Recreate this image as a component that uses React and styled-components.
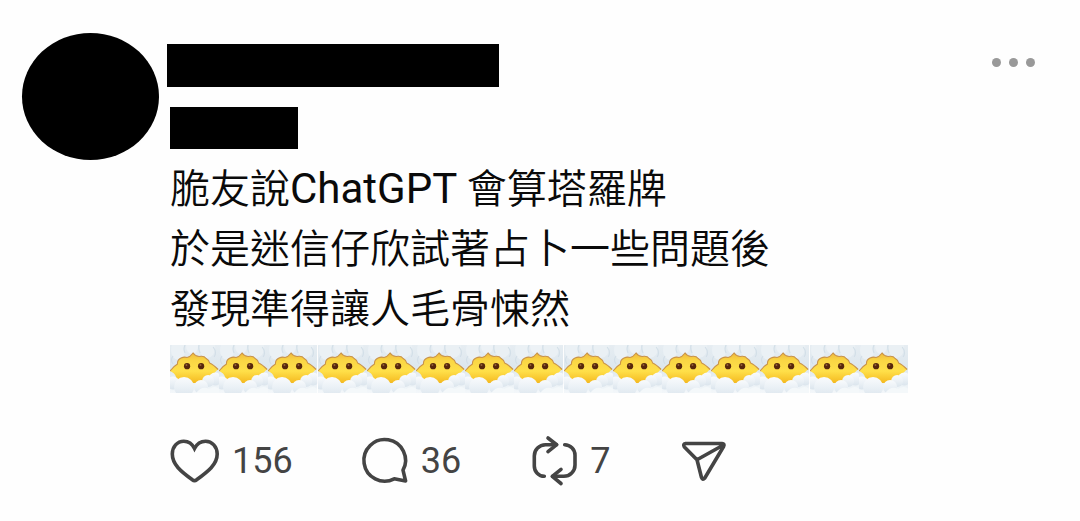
import React from "react";
import styled, { createGlobalStyle } from "styled-components";

const GlobalStyle = createGlobalStyle`
  * {
    box-sizing: border-box;
  }

  body {
    margin: 0;
    background: #fefefe;
    color: #0a0a0a;
    font-family: Roboto, "Noto Sans CJK TC", sans-serif;
  }
`;

const Post = styled.article`
  display: flex;
  align-items: flex-start;
  gap: 8px;
  padding: 33px 41px 32px 22px;
`;

const Avatar = styled.div`
  flex: none;
  width: 137px;
  height: 127px;
  border-radius: 50%;
  background: #000;
`;

const Body = styled.div`
  flex: 1;
  min-width: 0;
  padding-top: 11px;
`;

const Header = styled.header`
  display: flex;
  justify-content: space-between;
  align-items: flex-start;
`;

const NameBar = styled.div`
  width: 332px;
  height: 43px;
  background: #000;
`;

const HandleBar = styled.div`
  width: 128px;
  height: 42px;
  background: #000;
`;

const MoreButton = styled.button`
  display: flex;
  gap: 8px;
  padding: 14px 4px;
  border: 0;
  background: none;
  cursor: pointer;
`;

const Dot = styled.span`
  width: 9px;
  height: 9px;
  border-radius: 50%;
  background: #999;
`;

const Content = styled.div`
  padding: 20px 0 0 3px;
`;

const Text = styled.p`
  margin: 11px 0 0;
  font-size: 40px;
  line-height: 60px;
  font-weight: 350;
`;

const Latin = styled.span`
  font-size: 42px;
  line-height: 1;
  font-weight: 400;
`;

const EmojiRow = styled.div`
  display: grid;
  grid-template-columns: repeat(15, 1fr);
  max-width: 738px;
  margin-top: 5px;

  svg {
    display: block;
    width: 100%;
    height: 48px;
  }
`;

const Actions = styled.footer`
  display: flex;
  align-items: center;
  gap: 70px;
  margin-top: 43px;
`;

const ActionButton = styled.button`
  display: flex;
  align-items: center;
  gap: 12px;
  height: 50px;
  padding: 0;
  border: 0;
  background: none;
  color: #444;
  font-family: inherit;
  font-size: 36px;
  line-height: 48px;
  cursor: pointer;

  svg {
    flex: none;
    overflow: visible;
    fill: none;
    stroke: currentColor;
    stroke-width: 3.6;
    stroke-linecap: round;
    stroke-linejoin: round;
  }
`;

function HeartIcon() {
  return (
    <svg width="50" height="46" viewBox="0 0 50 46" aria-hidden="true">
      <path
        strokeLinejoin="miter"
        d="M24.5 10.5C22.3 6 18.3 3.2 13.8 3.2C7.2 3.2 2.3 8.7 2.3 16C2.3 26.5 11 33.5 22.4 41.8Q24.5 43.6 26.6 41.8C38 33.5 47.2 26.5 47.2 16C47.2 8.7 42 3.2 35.6 3.2C31 3.2 26.8 6 24.5 10.5Z"
      />
    </svg>
  );
}

function CommentIcon() {
  return (
    <svg width="46" height="46" viewBox="1 0 46 46" aria-hidden="true">
      <path d="M41 32.2A20.8 20.8 0 1 0 32.2 40.8L43.6 43Z" />
    </svg>
  );
}

function RepostIcon() {
  return (
    <svg width="47" height="50" viewBox="-1 0 47 50" aria-hidden="true">
      <path d="M24.5 8.7H13.5A11.2 11.2 0 0 0 2.3 20V30A10.2 10.2 0 0 0 12.3 40.3" />
      <path d="M16 2L24.7 8.7L16 15.7" />
      <path d="M32.7 8.7A10.5 10.5 0 0 1 43 19V29A11.2 11.2 0 0 1 31.8 40.3H20.5" />
      <path d="M29 33.3L20.3 40.3L29 47.5" />
    </svg>
  );
}

function SendIcon() {
  return (
    <svg width="47" height="42" viewBox="-1 0 47 42" aria-hidden="true">
      <path d="M4.6 3.5H41Q44 3.7 42.6 6.5L23.8 38Q21.6 40.6 20.5 37.5L16 19.8L3.4 7Q1.6 4 4.6 3.5ZM16 19.8L42.4 5" />
    </svg>
  );
}

/* Gradients and symbol shared by every face in the row */
const HiddenSvg = styled.svg`
  position: absolute;
`;

function EmojiDefs() {
  return (
    <HiddenSvg width="0" height="0" aria-hidden="true">
      <defs>
        <linearGradient id="sky" x1="0" y1="0" x2="0" y2="1">
          <stop offset="0" stopColor="#e6edf2" />
          <stop offset="0.45" stopColor="#dde7ee" />
          <stop offset="1" stopColor="#f3f7fa" />
        </linearGradient>
        <linearGradient id="face" x1="0" y1="0" x2="0" y2="1">
          <stop offset="0" stopColor="#efb93c" />
          <stop offset="0.25" stopColor="#fad644" />
          <stop offset="0.6" stopColor="#ffe04a" />
          <stop offset="1" stopColor="#f4b920" />
        </linearGradient>
        <linearGradient id="puff" x1="0" y1="0" x2="0" y2="1">
          <stop offset="0" stopColor="#f9fbfd" />
          <stop offset="0.5" stopColor="#ebf1f6" />
          <stop offset="1" stopColor="#dbe5ed" />
        </linearGradient>
        <symbol id="cloudFace" viewBox="0 0 49 48" preserveAspectRatio="none">
          <rect width="49" height="48" fill="url(#sky)" />
          <ellipse cx="8" cy="5" rx="7" ry="10" fill="#ebf1f5" />
          <ellipse cx="22" cy="1" rx="6" ry="8" fill="#edf2f6" />
          <ellipse cx="37" cy="3" rx="8" ry="10" fill="#eaf0f4" />
          <path
            d="M15 0Q13 4 15 8M29 0Q28 4 30 8M43 2Q47 7 44 12M3 11Q0 15 3 19"
            fill="none"
            stroke="#d3dfe8"
            strokeWidth="1.2"
          />
          <path
            d="M0 26Q4 21 7.5 19Q7 15 11 13Q14 11.5 17 12.5Q20 12 23 8Q25.5 11.5 29 11.5Q34 10.5 36 13.5Q39 15 39.5 18Q43 19.5 48 24.5Q44 27 43 31L38 38H8L6 32Q5 28 0 26Z"
            fill="url(#face)"
          />
          <path
            d="M0 26Q4 21 7.5 19Q7 15 11 13Q14 11.5 17 12.5Q20 12 23 8Q25.5 11.5 29 11.5Q34 10.5 36 13.5Q39 15 39.5 18Q43 19.5 48 24.5"
            fill="none"
            stroke="#c9934a"
            strokeWidth="1.1"
          />
          <circle cx="17" cy="21.2" r="3.1" fill="#57270c" />
          <circle cx="31" cy="21.2" r="3.1" fill="#57270c" />
          <circle cx="16.4" cy="20" r="1" fill="#93603a" />
          <circle cx="30.4" cy="20" r="1" fill="#93603a" />
          <circle cx="45" cy="34" r="6.5" fill="url(#puff)" />
          <circle cx="38" cy="36" r="6" fill="url(#puff)" />
          <circle cx="31" cy="42" r="7" fill="url(#puff)" />
          <circle cx="3" cy="38" r="6.5" fill="url(#puff)" />
          <circle cx="14" cy="42" r="10" fill="url(#puff)" />
          <path d="M26 48Q32 40 39 44Q45 40 49 44V48Z" fill="#f4f8fa" />
        </symbol>
      </defs>
    </HiddenSvg>
  );
}

const actions = [
  { label: "Like", Icon: HeartIcon, count: 156 },
  { label: "Reply", Icon: CommentIcon, count: 36 },
  { label: "Repost", Icon: RepostIcon, count: 7 },
  { label: "Share", Icon: SendIcon },
];

export default function App() {
  return (
    <>
      <GlobalStyle />
      <EmojiDefs />
      <Post>
        <Avatar />
        <Body>
          <Header>
            <NameBar />
            <MoreButton aria-label="More">
              <Dot />
              <Dot />
              <Dot />
            </MoreButton>
          </Header>
          <Content>
            <HandleBar />
            <Text lang="zh-Hant">
              脆友說<Latin>ChatGPT </Latin>會算塔羅牌
              <br />
              於是迷信仔欣試著占卜一些問題後
              <br />
              發現準得讓人毛骨悚然
            </Text>
            <EmojiRow role="img" aria-label="Faces in clouds">
              {Array.from({ length: 15 }, (_, i) => (
                <svg key={i} viewBox="0 0 49 48" preserveAspectRatio="none">
                  <use href="#cloudFace" width="49" height="48" />
                </svg>
              ))}
            </EmojiRow>
            <Actions>
              {actions.map(({ label, Icon, count }) => (
                <ActionButton key={label} aria-label={label}>
                  <Icon />
                  {count && <span>{count}</span>}
                </ActionButton>
              ))}
            </Actions>
          </Content>
        </Body>
      </Post>
    </>
  );
}
